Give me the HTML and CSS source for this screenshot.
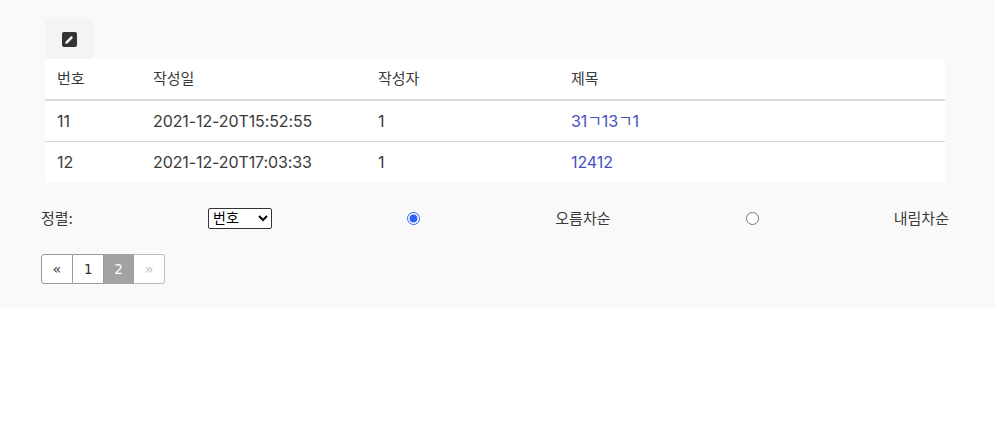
FILE: index.html
```html
<!DOCTYPE html>
<html lang="ko">
<head>
    <meta charset="UTF-8">
    <meta name="viewport" content="width=device-width, initial-scale=1.0">
    <title>게시판</title>
    <link rel="stylesheet" href="styles.css">
</head>
<body>
    <div class="board">
        <div class="list">
            <a class="write-btn" href="#" aria-label="글쓰기">
                <svg width="15" height="15" viewBox="0 0 15 15">
                    <rect width="15" height="15" rx="2" fill="#333"/>
                    <path d="M3.6 9.7 9.3 4l1.7 1.7-5.7 5.7-2.1.4z" fill="#fff"/>
                </svg>
            </a>
            <table class="posts">
                <thead>
                    <tr>
                        <th class="col-no">번호</th>
                        <th class="col-date">작성일</th>
                        <th class="col-writer">작성자</th>
                        <th>제목</th>
                    </tr>
                </thead>
                <tbody>
                    <tr>
                        <td>11</td>
                        <td>2021-12-20T15:52:55</td>
                        <td>1</td>
                        <td><a href="#">31ㄱ13ㄱ1</a></td>
                    </tr>
                    <tr>
                        <td>12</td>
                        <td>2021-12-20T17:03:33</td>
                        <td>1</td>
                        <td><a href="#">12412</a></td>
                    </tr>
                </tbody>
            </table>
        </div>
        <form class="sort-form">
            <label for="sort">정렬:</label>
            <select id="sort" class="sort-select">
                <option>번호</option>
            </select>
            <input type="radio" name="order" id="asc" checked>
            <label for="asc">오름차순</label>
            <input type="radio" name="order" id="desc">
            <label for="desc">내림차순</label>
        </form>
        <ul class="pagination">
            <li><a href="#">«</a></li>
            <li><a href="#">1</a></li>
            <li class="active"><a href="#">2</a></li>
            <li class="disabled"><a href="#">»</a></li>
        </ul>
    </div>
</body>
</html>
```

FILE: styles.css
```css
body {
    margin: 0;
    font-family: Inter, "Noto Sans CJK KR", sans-serif;
    font-size: 15px;
    color: #3a3a3a;
    background-color: #fff;
}

a {
    text-decoration: none;
}

.board {
    height: 308px;
    box-sizing: border-box;
    padding-top: 19px;
    background-color: #f9f9f9;
}

.list {
    width: 900px;
    margin-left: 45px;
}

.write-btn {
    display: flex;
    align-items: center;
    justify-content: center;
    width: 48px;
    height: 40px;
    background-color: #f4f4f4;
    border-radius: 4px 4px 0 0;
}

.posts {
    width: 100%;
    border-collapse: collapse;
    table-layout: fixed;
    background-color: #fff;
}

.posts th,
.posts td {
    height: 41px;
    padding: 0 12px;
    box-sizing: border-box;
    font-weight: 400;
    line-height: 20px;
    text-align: left;
}

.posts th {
    padding-bottom: 1px;
    border-bottom: 2px solid #dbdce0;
}

.posts td {
    padding-top: 1px;
    font-size: 16px;
    letter-spacing: -0.1px;
}

.posts tbody tr:first-child td {
    border-bottom: 1px solid #d5d5d5;
}

.posts a {
    color: #4550c4;
}

.col-no {
    width: 96px;
}

.col-date {
    width: 225px;
}

.col-writer {
    width: 193px;
}

.sort-form {
    display: flex;
    align-items: center;
    justify-content: space-between;
    margin: 25px 46px 0 41px;
    height: 22px;
}

.sort-form label {
    padding-bottom: 2px;
}

.sort-select {
    width: 64px;
    height: 21px;
    padding: 0;
    font-family: "DejaVu Sans", "Noto Sans CJK KR", sans-serif;
    font-size: 14px;
    color: #000;
    background-color: #fff;
    border: 1px solid #333;
    border-radius: 2px;
}

.sort-form input {
    margin: 0;
    width: 13px;
    height: 13px;
    accent-color: #2f62f5;
}

.pagination {
    display: flex;
    width: max-content;
    margin: 25px 0 0 41px;
    padding: 0;
    list-style: none;
    font-family: "DejaVu Sans Mono", monospace;
    font-size: 14px;
}

.pagination a {
    display: flex;
    align-items: center;
    justify-content: center;
    box-sizing: border-box;
    width: 31px;
    height: 30px;
    color: #333;
    background-color: #fff;
    border: 1px solid #999;
    border-left: 0;
}

.pagination li:first-child a {
    width: 32px;
    border-left: 1px solid #999;
    border-radius: 3px 0 0 3px;
}

.pagination li:last-child a {
    border-radius: 0 3px 3px 0;
}

.pagination .active a {
    width: 30px;
    color: #fff;
    background-color: #a2a2a2;
    border-color: #a2a2a2;
}

.pagination .disabled a {
    color: #bbb;
    border-color: #bbb;
}
```
